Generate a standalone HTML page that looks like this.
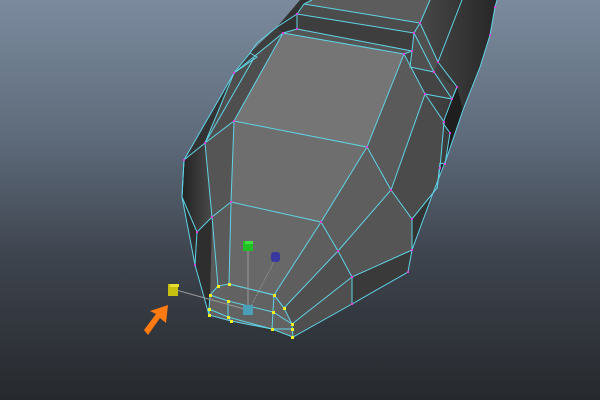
<!DOCTYPE html><html><head><style>html,body{margin:0;padding:0;width:600px;height:400px;overflow:hidden;background:#26292d}svg{display:block}</style></head><body>
<svg width="600" height="400" viewBox="0 0 600 400" xmlns="http://www.w3.org/2000/svg">
<defs>
<linearGradient id="bg" x1="0" y1="0" x2="0" y2="1"><stop offset="0" stop-color="#7b8b9d"/><stop offset="0.35" stop-color="#5d6a7a"/><stop offset="0.65" stop-color="#3d434d"/><stop offset="1" stop-color="#26292d"/></linearGradient>
<linearGradient id="rs" x1="0" y1="0" x2="1" y2="0"><stop offset="0" stop-color="#4a4a4a"/><stop offset="1" stop-color="#262626"/></linearGradient>
<linearGradient id="ls" x1="0" y1="0" x2="1" y2="0"><stop offset="0" stop-color="#222"/><stop offset="1" stop-color="#4a4a4a"/></linearGradient>
</defs>
<rect width="600" height="400" fill="url(#bg)"/>
<!-- silhouette -->
<polygon points="300,0 497,0 495,7 490,35 480,67 463,110 447,157 433,193 412,250 408,272 293,337 209,315 195,265 182,197 184,160 234,73 250,53 277,27" fill="#333"/>
<!-- right back body -->
<polygon points="420,23 430,0 497,0 495,7 490,35 480,67 463,110 447,157 433,193 420,205 437,188 440,168 444,122 425,94 414,33" fill="url(#rs)"/>
<polygon points="457,87 452,99 443,123 450,133 445,164 440,163 437,189 433,193 447,157 463,110" fill="#1e1e1e"/>
<polygon points="304,4 312,0 430,0 420,23" fill="#5c5c5c"/>
<polygon points="297,14 304,4 420,23 414,33" fill="#4c4c4c"/>
<polygon points="297,14 414,33 412,51 297,29" fill="#3e3e3e"/>
<polygon points="297,29 412,51 404,54 283,33" fill="#555"/>
<polygon points="414,33 420,23 438,62 434,72 410,67 412,51" fill="#505050"/>
<polygon points="410,67 434,72 456,88 452,99 425,94 404,54 412,51" fill="#444"/>
<!-- front faces -->
<polygon points="283,33 404,54 367,147 234,121" fill="#757575"/>
<polygon points="234,121 367,147 321,222 231,202" fill="#6e6e6e"/>
<polygon points="231,202 321,222 274,295 229,284" fill="#686868"/>
<polygon points="404,54 425,94 391,190 367,147" fill="#5a5a5a"/>
<polygon points="367,147 391,190 338,251 321,222" fill="#5e5e5e"/>
<polygon points="321,222 338,251 284,308 274,295" fill="#5e5e5e"/>
<polygon points="425,94 444,122 440,168 437,188 412,219 391,190" fill="#4b4b4b"/>
<polygon points="391,190 412,219 412,250 352,277 338,251" fill="#555"/>
<polygon points="412,250 408,272 352,304 352,277" fill="#3a3a3a"/>
<polygon points="338,251 352,277 352,304 293,337 292,324 284,308" fill="#4f4f4f"/>
<!-- left faces -->
<polygon points="234,73 283,33 234,121 205,143" fill="#4e4e4e"/>
<polygon points="250,53 277,27 283,33 234,73" fill="#3e3e3e"/>
<polygon points="205,143 234,121 231,202 212,217" fill="#555"/>
<polygon points="184,160 205,143 212,217 197,232 182,197" fill="url(#ls)"/>
<polygon points="212,217 231,202 229,284 218,286 210,295" fill="#5a5a5a"/>
<polygon points="182,197 197,232 212,217 210,295 209,315 195,265" fill="#2e2e2e"/>
<polygon points="218,286 229,284 274,295 284,308 292,324 293,337 272,329 231,321 209,315 210,295" fill="#626262"/>
<!-- wires -->
<g fill="none" stroke="#5fd3e6" stroke-width="1">
<polyline points="283,33 404,54 367,147 234,121 283,33"/>
<polyline points="234,121 231,202 321,222 367,147"/>
<polyline points="231,202 229,284 274,295 321,222"/>
<polyline points="404,54 425,94 391,190 367,147"/>
<polyline points="391,190 338,251 321,222"/>
<polyline points="338,251 284,308 274,295"/>
<polyline points="425,94 444,122 440,168 437,188 412,219 391,190"/>
<polyline points="412,219 412,250 352,277 338,251"/>
<polyline points="412,250 408,272 352,304 352,277"/>
<polyline points="352,304 293,337 292,324 284,308"/>
<polyline points="352,277 292,324"/>
<polyline points="283,33 234,73 205,143 234,121"/>
<polyline points="205,143 254,58"/>
<polyline points="205,143 184,160 182,197 197,232 212,217 231,202"/>
<polyline points="205,143 212,217 218,286"/>
<polyline points="197,232 195,265 209,315"/>
<polyline points="184,160 182,197 195,265"/>
<polyline points="218,286 229,284 274,295 284,308"/>
<polyline points="218,286 210,295 209,309 209,315 231,321 272,329 293,337"/>
<polyline points="210,295 228,301 273,312 292,324"/>
<polyline points="228,301 228,317 231,321"/>
<polyline points="274,295 273,312 272,329"/>
<polyline points="209,309 228,317 272,329 293,329"/>
<polyline points="184,160 234,73 250,53 257,43 277,27 297,14 304,4 312,0"/>
<polyline points="297,14 297,29 283,33"/>
<polyline points="297,14 414,33 412,51 404,54"/>
<polyline points="297,29 412,51"/>
<polyline points="304,4 420,23 414,33"/>
<polyline points="420,23 430,0"/>
<polyline points="438,62 462,0"/>
<polyline points="420,23 438,62 457,87 452,99 425,94"/>
<polyline points="412,51 410,67 434,72 452,99"/>
<polyline points="414,33 434,72"/>
<polyline points="497,0 495,7 490,35 480,67 463,110 447,157 433,193 412,250"/>
<polyline points="457,87 452,99 443,123 450,133 445,164 440,163 437,189"/>
<polyline points="444,122 443,123"/>
<polyline points="250,53 257,57 234,73"/>
</g>
<!-- magenta verts -->
<g fill="#e040e0">
<rect x="282" y="32" width="2" height="2"/><rect x="403" y="53" width="2" height="2"/><rect x="366" y="146" width="2" height="2"/><rect x="233" y="120" width="2" height="2"/><rect x="230" y="201" width="2" height="2"/><rect x="320" y="221" width="2" height="2"/><rect x="390" y="189" width="2" height="2"/><rect x="411" y="218" width="2" height="2"/><rect x="411" y="249" width="2" height="2"/><rect x="407" y="271" width="2" height="2"/><rect x="351" y="276" width="2" height="2"/><rect x="351" y="303" width="2" height="2"/><rect x="337" y="250" width="2" height="2"/><rect x="424" y="93" width="2" height="2"/><rect x="443" y="121" width="2" height="2"/><rect x="439" y="167" width="2" height="2"/><rect x="204" y="142" width="2" height="2"/><rect x="183" y="159" width="2" height="2"/><rect x="211" y="216" width="2" height="2"/><rect x="196" y="231" width="2" height="2"/><rect x="194" y="264" width="2" height="2"/><rect x="296" y="13" width="2" height="2"/><rect x="296" y="28" width="2" height="2"/><rect x="413" y="32" width="2" height="2"/><rect x="411" y="50" width="2" height="2"/><rect x="419" y="22" width="2" height="2"/><rect x="433" y="71" width="2" height="2"/><rect x="451" y="98" width="2" height="2"/><rect x="233" y="72" width="2" height="2"/><rect x="437" y="61" width="2" height="2"/><rect x="456" y="86" width="2" height="2"/><rect x="449" y="132" width="2" height="2"/><rect x="444" y="163" width="2" height="2"/><rect x="494" y="6" width="2" height="2"/><rect x="489" y="34" width="2" height="2"/>
</g>
<!-- gizmo lines -->
<g stroke="#999" stroke-width="1" fill="none">
<line x1="176" y1="290" x2="248" y2="310"/>
<line x1="248" y1="250" x2="248" y2="310"/>
<line x1="276" y1="258" x2="250" y2="308" stroke-dasharray="1,1"/>
</g>
<g fill="#f0f020">
<rect x="217" y="285" width="3" height="3"/><rect x="228" y="283" width="3" height="3"/><rect x="209" y="294" width="3" height="3"/><rect x="273" y="294" width="3" height="3"/><rect x="208" y="308" width="3" height="3"/><rect x="208" y="314" width="3" height="3"/><rect x="227" y="300" width="3" height="3"/><rect x="227" y="316" width="3" height="3"/><rect x="230" y="320" width="3" height="3"/><rect x="272" y="311" width="3" height="3"/><rect x="283" y="307" width="3" height="3"/><rect x="271" y="328" width="3" height="3"/><rect x="291" y="323" width="3" height="3"/><rect x="291" y="328" width="3" height="3"/><rect x="291" y="336" width="3" height="3"/>
</g>
<rect x="243" y="241" width="10" height="10" fill="#20c020"/><rect x="245" y="241" width="8" height="3" fill="#40e040"/>
<rect x="271" y="252" width="9" height="10" rx="3" fill="#3838a0"/>
<rect x="168" y="284" width="10" height="12" fill="#c8c010"/><rect x="170" y="284" width="9" height="3" fill="#e8e030"/>
<rect x="243" y="305" width="10" height="10" fill="#4aa0b8"/>
<!-- arrow -->
<polygon points="168,305 166,323 160,318 148,335 144,330 156,314 150,311" fill="#ff7a10"/>
</svg>
</body></html>
